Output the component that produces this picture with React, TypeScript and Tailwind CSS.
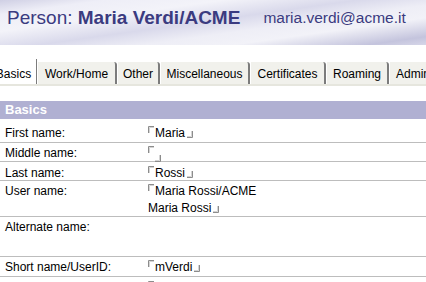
import React from "react";

const tabs = [
  { label: "Basics", w: "w-[46px] text-center", active: true },
  { label: "Work/Home", w: "w-[80px] text-center" },
  { label: "Other", w: "w-[43px] text-center" },
  { label: "Miscellaneous", w: "w-[90px] text-center" },
  { label: "Certificates", w: "w-[76px] text-center" },
  { label: "Roaming", w: "w-[63px] text-center" },
  { label: "Administration", w: "w-[100px] text-left pl-[6px]" },
];

function OpenMark() {
  return (
    <svg width="6" height="7" viewBox="0 0 6 7" className="inline-block align-top mt-[1px] mr-[1px]">
      <path d="M0.5 7 V0.5 H6" stroke="#8c8c8c" fill="none" />
      <path d="M1.5 7 V1.5 H6" stroke="#d4d4d4" fill="none" />
    </svg>
  );
}

function CloseMark() {
  return (
    <svg width="6" height="7" viewBox="0 0 6 7" className="inline-block align-baseline ml-[2px] mb-[-1px]">
      <path d="M0 6.5 H5.5 V0" stroke="#8c8c8c" fill="none" />
      <path d="M0 5.5 H4.5 V0" stroke="#d4d4d4" fill="none" />
    </svg>
  );
}

function Field({ children }: { children?: React.ReactNode }) {
  return (
    <span>
      <OpenMark />
      {children}
      <CloseMark />
    </span>
  );
}

export default function App() {
  return (
    <div className="w-[426px] h-[282px] overflow-hidden bg-white font-['Liberation_Sans',Arial,sans-serif] text-[12px] leading-[17px] text-black">
      <div className="h-[45px] flex items-start pt-[6px] pl-[7px] text-[#3b3b80] bg-[linear-gradient(172deg,#cfcfe4_0%,#eeeef7_14%,#f3f3f9_30%,#d9d9eb_48%,#eeeef6_62%,#f2f2f8_74%,#c4c4dd_92%,#d6d6e8_100%)]">
        <div className="text-[19px] leading-[24px]">
          Person: <span className="font-bold">Maria Verdi/ACME</span>
        </div>
        <div className="ml-[23px] text-[15.5px] leading-[24px]">maria.verdi@acme.it</div>
      </div>

      <div className="mt-[14px] flex items-end ml-[-9px] border-b-[2px] border-[#e6e6de] whitespace-nowrap">
        {tabs.map((t) =>
          t.active ? (
            <div key={t.label} className={`${t.w} shrink-0 h-[25px] pt-[7px] bg-white border-r border-[#7c7c7c]`}>
              {t.label}
            </div>
          ) : (
            <div
              key={t.label}
              className={`${t.w} shrink-0 h-[22px] pt-[4px] bg-[#f1f1ec] border-l border-l-white border-r-2 border-r-[#7c7c7c] rounded-tr-[3px]`}
            >
              {t.label}
            </div>
          )
        )}
      </div>

      <div className="mt-[15px] h-[18px] bg-[#b0b0d2] text-white font-bold text-[13px] leading-[18px] pl-[5px]">
        Basics
      </div>

      <div className="grid grid-cols-[148px_1fr]">
        <div className="col-span-2 grid grid-cols-subgrid h-[24px] pt-[6px] border-b border-[#bdbdbd]">
          <div className="pl-[5px]">First name:</div>
          <div>
            <Field>Maria</Field>
          </div>
        </div>
        <div className="col-span-2 grid grid-cols-subgrid h-[19px] pt-[2px] border-b border-[#bdbdbd]">
          <div className="pl-[5px]">Middle name:</div>
          <div className="flex flex-col leading-[8px]">
            <span>
              <OpenMark />
            </span>
            <span className="pl-[5px]">
              <CloseMark />
            </span>
          </div>
        </div>
        <div className="col-span-2 grid grid-cols-subgrid h-[19px] pt-[3px] border-b border-[#bdbdbd]">
          <div className="pl-[5px]">Last name:</div>
          <div>
            <Field>Rossi</Field>
          </div>
        </div>
        <div className="col-span-2 grid grid-cols-subgrid h-[36px] pt-[2px] border-b border-[#bdbdbd]">
          <div className="pl-[5px]">User name:</div>
          <div>
            <div>
              <OpenMark />
              Maria Rossi/ACME
            </div>
            <div>
              Maria Rossi
              <CloseMark />
            </div>
          </div>
        </div>
        <div className="col-span-2 grid grid-cols-subgrid h-[40px] pt-[2px] border-b border-[#bdbdbd]">
          <div className="pl-[5px]">Alternate name:</div>
          <div></div>
        </div>
        <div className="col-span-2 grid grid-cols-subgrid h-[20px] pt-[2px] border-b border-[#bdbdbd]">
          <div className="pl-[5px]">Short name/UserID:</div>
          <div>
            <Field>mVerdi</Field>
          </div>
        </div>
        <div className="col-span-2 grid grid-cols-subgrid h-[20px] pt-[3px]">
          <div className="pl-[5px]">Foreign name:</div>
          <div>
            <OpenMark />
          </div>
        </div>
      </div>
    </div>
  );
}
